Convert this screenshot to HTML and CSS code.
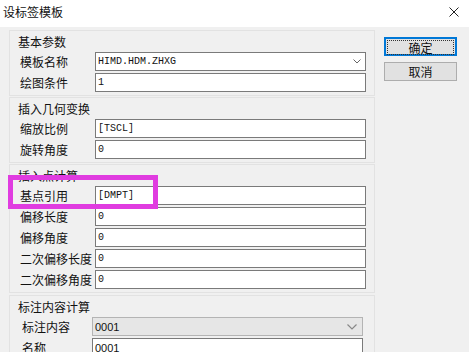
FILE: index.html
```html
<!DOCTYPE html>
<html lang="zh-CN">
<head>
    <meta charset="UTF-8">
    <title>设标签模板</title>
    <link rel="stylesheet" href="styles.css">
</head>
<body>
    <div class="titlebar">
        <span class="title">设标签模板</span>
        <svg class="close" width="10" height="10" viewBox="0 0 10 10">
            <path d="M0.5 0.5 L9.5 9.5 M9.5 0.5 L0.5 9.5" stroke="#222" stroke-width="1" fill="none"/>
        </svg>
    </div>

    <div class="dialog">
        <div class="groups">
            <div class="group">
                <div class="group-title">基本参数</div>
                <div class="row">
                    <label>模板名称</label>
                    <div class="field combo">
                        <span>HIMD.HDM.ZHXG</span>
                        <svg class="chev" width="8" height="5" viewBox="0 0 8 5">
                            <path d="M0.5 0.5 L4 4 L7.5 0.5" stroke="#666" stroke-width="1" fill="none"/>
                        </svg>
                    </div>
                </div>
                <div class="row">
                    <label>绘图条件</label>
                    <div class="field"><span>1</span></div>
                </div>
            </div>

            <div class="group">
                <div class="group-title">插入几何变换</div>
                <div class="row">
                    <label>缩放比例</label>
                    <div class="field"><span>[TSCL]</span></div>
                </div>
                <div class="row">
                    <label>旋转角度</label>
                    <div class="field"><span>0</span></div>
                </div>
            </div>

            <div class="group">
                <div class="group-title">插入点计算</div>
                <div class="row">
                    <label>基点引用</label>
                    <div class="field"><span>[DMPT]</span></div>
                </div>
                <div class="row">
                    <label>偏移长度</label>
                    <div class="field"><span>0</span></div>
                </div>
                <div class="row">
                    <label>偏移角度</label>
                    <div class="field"><span>0</span></div>
                </div>
                <div class="row">
                    <label>二次偏移长度</label>
                    <div class="field"><span>0</span></div>
                </div>
                <div class="row">
                    <label>二次偏移角度</label>
                    <div class="field"><span>0</span></div>
                </div>
            </div>

            <div class="group last">
                <div class="group-title">标注内容计算</div>
                <div class="row alt">
                    <label>标注内容</label>
                    <div class="field select">
                        <span>0001</span>
                        <svg class="chev big" width="10" height="6" viewBox="0 0 10 6">
                            <path d="M0.5 0.5 L5 5 L9.5 0.5" stroke="#888" stroke-width="1.2" fill="none"/>
                        </svg>
                    </div>
                </div>
                <div class="row alt">
                    <label>名称</label>
                    <div class="field plain"><span>0001</span></div>
                </div>
            </div>
        </div>

        <div class="buttons">
            <button class="btn primary"><span>确定</span></button>
            <button class="btn">取消</button>
        </div>
    </div>

    <div class="marker"></div>
</body>
</html>
```

FILE: styles.css
```css
body {
    margin: 0;
    width: 469px;
    height: 352px;
    overflow: hidden;
    background-color: #f0f0f0;
    color: #111;
    font-family: "Noto Sans CJK SC", sans-serif;
    font-size: 12px;
    line-height: 16px;
    position: relative;
}
.titlebar {
    height: 27px;
    box-sizing: border-box;
    background-color: #fff;
    display: flex;
    justify-content: space-between;
    align-items: flex-start;
    padding: 4px 10px 0 3px;
}
.close {
    margin-top: 3px;
}
.dialog {
    display: flex;
    padding: 3px 0 0 9px;
}
.groups {
    width: 366px;
}
.group {
    border: 1px solid #e2e2e2;
    padding: 3px 0 3px 0;
    margin-bottom: 1px;
}
.group.last {
    margin-top: 2px;
}
.group-title {
    padding-left: 8px;
    line-height: 16px;
    margin-bottom: 2px;
}
.row {
    display: flex;
    height: 19px;
    padding: 0 8px 0 10px;
    margin-bottom: 2px;
}
.row:last-child {
    margin-bottom: 0;
}
.row label {
    width: 75px;
    line-height: 19px;
    flex-shrink: 0;
    white-space: nowrap;
}
.row.alt {
    padding: 0 11px 0 12px;
}
.row.alt label {
    width: 70px;
}
.field {
    flex: 1;
    box-sizing: border-box;
    border: 1px solid #7a7a7a;
    background-color: #fff;
    display: flex;
    align-items: center;
    padding-left: 2px;
    font-family: "Liberation Mono", monospace;
    font-size: 10px;
    color: #111;
}
.field.combo {
    justify-content: space-between;
    padding-right: 4px;
}
.field.select {
    background-color: #e6e6e6;
    border-color: #b4b4b4;
    justify-content: space-between;
    padding-right: 5px;
}
.field.select, .field.plain {
    font-family: "Liberation Sans", sans-serif;
    font-size: 11px;
}
.buttons {
    margin-left: 9px;
    margin-top: 7px;
    display: flex;
    flex-direction: column;
    gap: 6px;
    width: 73px;
}
.btn {
    height: 19px;
    box-sizing: border-box;
    background-color: #e1e1e1;
    border: 1px solid #adadad;
    padding: 0;
    font-family: "Noto Sans CJK SC", sans-serif;
    font-size: 12px;
    line-height: 15px;
    color: #111;
}
.btn.primary {
    border: 2px solid #0078d7;
    padding: 1px;
}
.btn.primary span {
    display: block;
    height: 13px;
    line-height: 13px;
    border: 1px dotted #333;
}
.marker {
    position: absolute;
    left: 8px;
    top: 175px;
    width: 150px;
    height: 34px;
    box-sizing: border-box;
    border: 5px solid #e03ce0;
}
```
